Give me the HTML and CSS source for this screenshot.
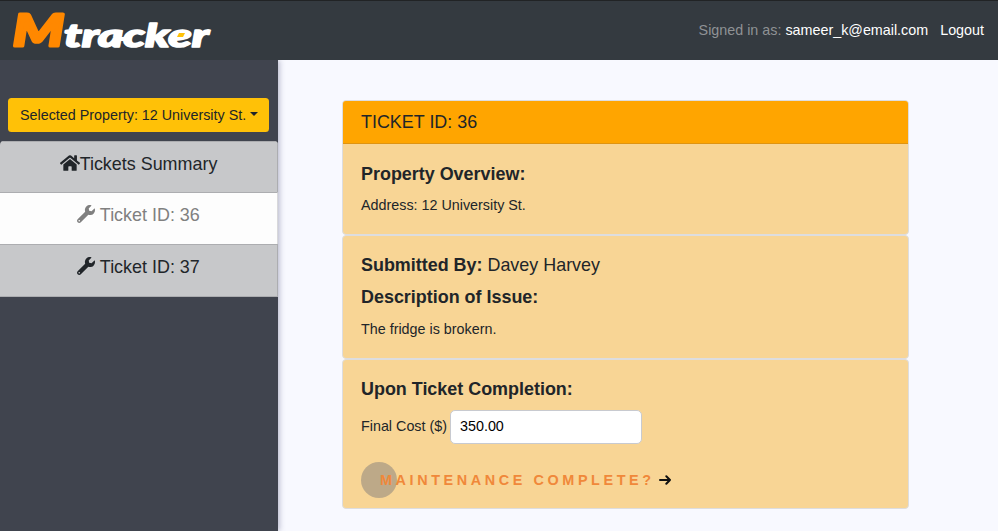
FILE: index.html
```html
<!DOCTYPE html>
<html lang="en">
<head>
<meta charset="utf-8">
<title>Mtracker</title>
<link rel="stylesheet" href="styles.css">
</head>
<body>
<header class="navbar">
  <a class="brand">
    <svg width="204" height="59" viewBox="0 0 204 59">
      <text class="brand-m" x="2" y="45" textLength="51" lengthAdjust="spacingAndGlyphs">M</text>
      <text class="brand-word" x="53" y="46" textLength="145" lengthAdjust="spacingAndGlyphs">tracker</text>
      <path class="brand-link" d="M109 38h7"/>
      <path class="brand-mark" d="M166 36l2-4h6l-2 4z"/>
    </svg>
  </a>
  <div class="account"><span class="muted">Signed in as: <a>sameer_k@email.com</a></span><a class="logout">Logout</a></div>
</header>
<div class="layout">
  <aside class="sidebar">
    <button class="property">Selected Property: 12 University St.<span class="caret"></span></button>
    <nav class="tickets">
      <a class="item"><svg class="home" viewBox="0 0 576 512"><path d="M280.37 148.26L96 300.11V464a16 16 0 0 0 16 16l112.06-.29a16 16 0 0 0 15.92-16V368a16 16 0 0 1 16-16h64a16 16 0 0 1 16 16v95.64a16 16 0 0 0 16 16.05L464 480a16 16 0 0 0 16-16V300L295.67 148.26a12.19 12.19 0 0 0-15.3 0zM571.6 251.47L488 182.56V44.05a12 12 0 0 0-12-12h-56a12 12 0 0 0-12 12v72.61L318.47 43a48 48 0 0 0-61 0L4.34 251.47a12 12 0 0 0-1.6 16.9l25.5 31A12 12 0 0 0 45.15 301l235.22-193.74a12.19 12.19 0 0 1 15.3 0L530.9 301a12 12 0 0 0 16.9-1.6l25.5-31a12 12 0 0 0-1.7-16.93z"/></svg>Tickets Summary</a>
      <a class="item current"><svg class="wrench" viewBox="0 0 512 512"><path d="M507.73 109.1c-2.24-9.03-13.54-12.09-20.12-5.51l-74.36 74.36-67.88-11.31-11.31-67.88 74.36-74.36c6.62-6.62 3.43-17.9-5.66-20.16-47.38-11.74-99.55.91-136.58 37.93-39.64 39.64-50.55 97.1-34.05 147.2L18.74 402.76c-24.99 24.99-24.99 65.51 0 90.5 24.99 24.99 65.51 24.99 90.5 0l213.21-213.21c50.12 16.71 107.47 5.68 147.37-34.22 37.07-37.07 49.7-89.32 37.91-136.73zM64 472c-13.25 0-24-10.75-24-24 0-13.26 10.75-24 24-24s24 10.74 24 24c0 13.25-10.75 24-24 24z"/></svg> Ticket ID: 36</a>
      <a class="item"><svg class="wrench" viewBox="0 0 512 512"><path d="M507.73 109.1c-2.24-9.03-13.54-12.09-20.12-5.51l-74.36 74.36-67.88-11.31-11.31-67.88 74.36-74.36c6.62-6.62 3.43-17.9-5.66-20.16-47.38-11.74-99.55.91-136.58 37.93-39.64 39.64-50.55 97.1-34.05 147.2L18.74 402.76c-24.99 24.99-24.99 65.51 0 90.5 24.99 24.99 65.51 24.99 90.5 0l213.21-213.21c50.12 16.71 107.47 5.68 147.37-34.22 37.07-37.07 49.7-89.32 37.91-136.73zM64 472c-13.25 0-24-10.75-24-24 0-13.26 10.75-24 24-24s24 10.74 24 24c0 13.25-10.75 24-24 24z"/></svg> Ticket ID: 37</a>
    </nav>
  </aside>
  <main class="content">
    <section class="card overview">
      <h1 class="card-header">TICKET ID: 36</h1>
      <div class="card-body">
        <h2>Property Overview:</h2>
        <p>Address: 12 University St.</p>
      </div>
    </section>
    <section class="card issue">
      <div class="card-body">
        <h2>Submitted By: <span>Davey Harvey</span></h2>
        <h2>Description of Issue:</h2>
        <p>The fridge is brokern.</p>
      </div>
    </section>
    <section class="card completion">
      <div class="card-body">
        <h2>Upon Ticket Completion:</h2>
        <div class="cost"><label for="cost">Final Cost ($)</label><input id="cost" type="text" value="350.00"></div>
        <button class="complete"><span>Maintenance complete?</span><svg width="13" height="10" viewBox="0 0 13 10"><path d="M1 5h10M7.3 1.2L11 5 7.3 8.8"/></svg></button>
      </div>
    </section>
  </main>
</div>
</body>
</html>
```
FILE: styles.css
```css
* { box-sizing: border-box; }
body {
  margin: 0;
  height: 531px;
  overflow: hidden;
  background: #f8f9ff;
  color: #212529;
  font: 14.34px/21.6px "Liberation Sans", Arial, sans-serif;
}
h1, h2, p { margin: 0; }
button, input { font: inherit; }
.navbar {
  position: relative;
  z-index: 1;
  height: 60px;
  padding: 0 14px 0 11px;
  display: flex;
  align-items: center;
  justify-content: space-between;
  background: #343a40;
  border-top: 1px solid #212325;
}
.brand svg { display: block; overflow: visible; }
.brand text {
  font-family: Lato, sans-serif;
  font-style: italic;
  font-weight: 900;
  stroke-linejoin: round;
}
.brand-m { font-size: 43.5px; fill: #ff8800; stroke: #ff8800; stroke-width: 3px; }
.brand-word { font-size: 32px; fill: #fff; stroke: #fff; stroke-width: 1.6px; }
.brand-link { stroke: #fff; stroke-width: 4; }
.brand-mark { fill: #ffc107; }
.account { display: flex; gap: 12px; color: #fff; }
.muted { color: #8f9295; }
.muted a { color: #fff; }
.layout { display: flex; height: 471px; }
.sidebar {
  width: 278px;
  flex: none;
  padding-top: 38px;
  background: #40444e;
  box-shadow: 1px 0 6px rgba(40, 40, 90, .35);
}
.property {
  display: flex;
  align-items: center;
  width: 261px;
  height: 34px;
  margin: 0 0 9px 8px;
  padding: 1px 12px 0;
  border: 0;
  border-radius: 3.5px;
  background: #ffc107;
  color: #212529;
  white-space: nowrap;
}
.caret {
  margin: -3px 0 0 4px;
  border: 4.3px solid transparent;
  border-top-color: currentColor;
  border-bottom: 0;
}
.tickets { border-radius: 4px 4px 0 0; overflow: hidden; }
.item {
  display: flex;
  justify-content: center;
  height: 52px;
  padding-top: 12px;
  border: solid #acadb0;
  border-width: 1px 1px 0 0;
  background: #c7c8ca;
  font-size: 17.93px;
  white-space: pre;
}
.item:first-child { height: 51px; }
.item:last-child { height: 53px; border-bottom-width: 1px; }
.item.current { background: #fdfdfd; color: #808080; border-right-color: #d8d8da; }
.item svg { fill: currentColor; height: 18px; }
.home { width: 20px; }
.wrench { width: 18px; }
.content { width: 567px; margin: 40px 0 0 64px; }
.card {
  border: 1px solid #dddddf;
  border-radius: 4px;
  background: #f8d595;
  overflow: hidden;
}
.overview { height: 135px; }
.issue { height: 124px; }
.completion { height: 150px; }
.card-header {
  height: 43px;
  padding: 11px 18px 9px;
  background: #ffa500;
  border-bottom: 1px solid #df9411;
  font-size: 17.93px;
  font-weight: 400;
}
.card-body { padding: 18px; }
.overview .card-body { padding-top: 19px; }
h2 { font-size: 17.93px; line-height: 22px; margin-bottom: 10px; }
h2 span { font-weight: 400; }
.issue p { margin-top: 11px; }
.cost { display: flex; align-items: center; gap: 3px; }
.cost input {
  width: 192px;
  height: 34px;
  padding: 0 9px 2px;
  border: 1px solid #c8cad0;
  border-radius: 5px;
  background: #fff;
  color: #000;
}
.complete {
  position: relative;
  display: flex;
  align-items: center;
  height: 36px;
  margin-top: 18px;
  padding: 0 0 0 19px;
  border: 0;
  background: none;
  color: #f0883a;
  font-size: 14.4px;
  font-weight: 700;
  letter-spacing: 3.6px;
  text-transform: uppercase;
}
.complete::before {
  content: "";
  position: absolute;
  left: 0;
  top: 0;
  width: 36px;
  height: 36px;
  border-radius: 50%;
  background: #bda988;
}
.complete span { position: relative; padding-top: 1px; }
.complete svg {
  margin: 0 0 0 4px;
  fill: none;
  stroke: #111;
  stroke-width: 2;
  stroke-linecap: round;
  stroke-linejoin: round;
}
```
